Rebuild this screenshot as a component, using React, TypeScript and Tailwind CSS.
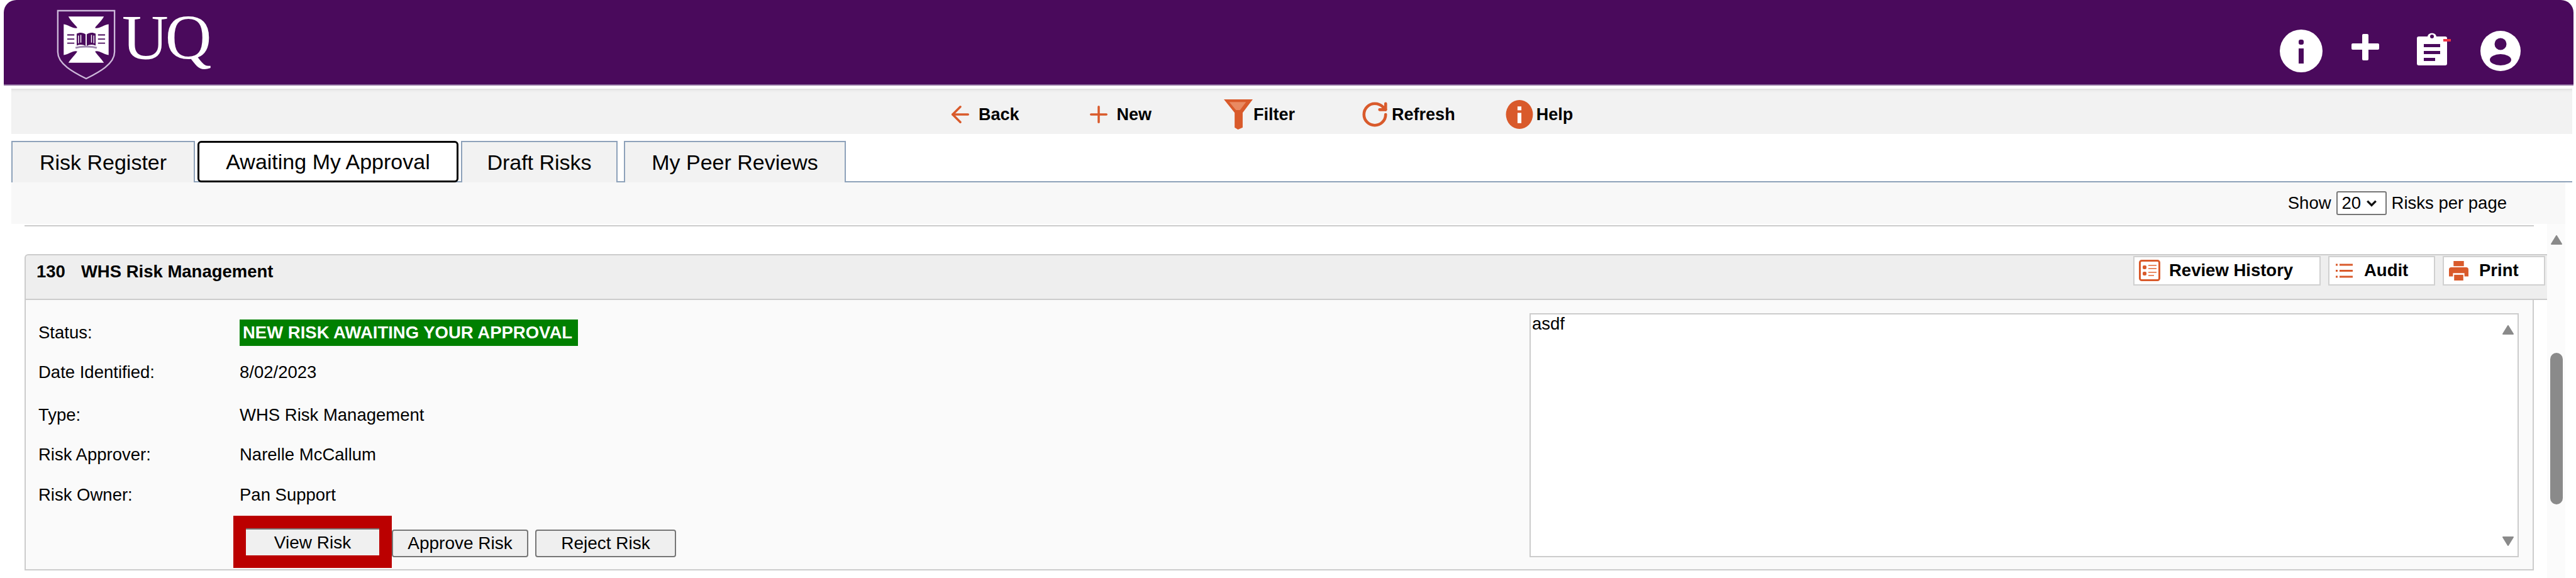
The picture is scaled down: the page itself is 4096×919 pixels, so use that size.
import React from "react";
import { ArrowLeft, Plus, RotateCw } from "lucide-react";

const FONT = "font-['Liberation_Sans',Arial,sans-serif]";

const UqLogo = () => (
  <div className="flex items-start">
    <svg width="94" height="112" viewBox="0 0 100 119" className="mt-[15px]">
      <path d="M2 2H98V72C98 92 72 106 50 117C28 106 2 92 2 72Z" fill="none" stroke="#cdb9da" strokeWidth="2.5" />
      <path d="M20 12H80C76 20 68 26 65 31C70 34 80 26 88 25V77C80 76 70 68 65 71C68 76 76 84 80 90H20C24 84 32 76 35 71C30 68 20 76 12 77V25C20 26 30 34 35 31C32 26 24 20 20 12Z" fill="#ffffff" />
      <path d="M34 41C39 38 45 39 49 42V62C45 59 39 59 34 61ZM51 42C55 39 61 38 66 41V61C61 59 55 59 51 62Z" fill="#4a0a5c" />
      <path d="M37 44V57M41 43V56M59 43V56M63 44V57" stroke="#ffffff" strokeWidth="1.5" />
      <path d="M18 43H30M18 50H30M18 57H30M70 43H82M70 50H82M70 57H82" stroke="#4a0a5c" strokeWidth="2" />
      <path d="M32 65C40 62 60 62 68 65" fill="none" stroke="#9d86ad" strokeWidth="3" />
    </svg>
    <span className="ml-[10px] mt-[4px] font-['Liberation_Serif',serif] text-[102px] leading-[112px] tracking-[-5px] text-white">
      UQ
    </span>
  </div>
);

const TopIcons = () => (
  <div className="flex items-start">
    <svg width="68" height="68" viewBox="0 0 68 68" className="mt-[47px]">
      <circle cx="34" cy="34" r="34" fill="#ffffff" />
      <rect x="30" y="30" width="8" height="24" fill="#4a0a5c" />
      <rect x="30" y="16" width="8" height="8" rx="3" fill="#4a0a5c" />
    </svg>
    <svg width="46" height="44" viewBox="0 0 46 44" className="ml-[45px] mt-[53px]">
      <path d="M18 3a2 2 0 0 1 2-2h6a2 2 0 0 1 2 2v13h15a2 2 0 0 1 2 2v6a2 2 0 0 1-2 2H28v15a2 2 0 0 1-2 2h-6a2 2 0 0 1-2-2V26H3a2 2 0 0 1-2-2v-6a2 2 0 0 1 2-2h15Z" fill="#ffffff" />
    </svg>
    <svg width="56" height="56" viewBox="0 0 56 56" className="ml-[58px] mt-[49px]">
      <path d="M4 9H18C19 2 31 2 32 9H46a3 3 0 0 1 3 3V52a3 3 0 0 1-3 3H4a3 3 0 0 1-3-3V12a3 3 0 0 1 3-3Z" fill="#ffffff" />
      <circle cx="25" cy="9" r="3" fill="#4a0a5c" />
      <path d="M12 21H38V26H12ZM12 32H38V37H12ZM12 43H30V48H12Z" fill="#4a0a5c" />
      <rect x="43" y="13" width="12" height="4" fill="#ee3344" />
    </svg>
    <svg width="64" height="64" viewBox="0 0 64 64" className="ml-[46px] mt-[49px]">
      <circle cx="32" cy="32" r="32" fill="#ffffff" />
      <circle cx="32" cy="21" r="9.5" fill="#4a0a5c" />
      <ellipse cx="32" cy="46" rx="17" ry="9" fill="#4a0a5c" />
    </svg>
  </div>
);

const Funnel = () => (
  <svg width="46" height="48" viewBox="0 0 43 45">
    <path d="M0 0H43L28 20V42L21 45L16 42V20Z" fill="#d95a2b" />
    <path d="M8 4H33L24 16H18Z" fill="#e98a62" />
  </svg>
);

const HelpIcon = () => (
  <svg width="44" height="46" viewBox="0 0 42 45">
    <ellipse cx="21" cy="22.5" rx="21" ry="22.5" fill="#d95a2b" />
    <rect x="18" y="20" width="6" height="16" fill="#ffffff" />
    <rect x="18" y="10" width="6" height="6" fill="#ffffff" />
  </svg>
);

const Triangle = ({ down }: { down?: boolean }) => (
  <svg width="20" height="15" viewBox="0 0 20 15">
    <path
      d={down ? "M2 1H18L10 14Z" : "M2 14H18L10 1Z"}
      fill="#8a8a8a"
      stroke="#8a8a8a"
      strokeWidth="2"
      strokeLinejoin="round"
    />
  </svg>
);

const tabBase = "h-[66px] flex items-center justify-center text-[34px] text-black";
const tabIdle = "bg-[#f2f2f2] border-t-2 border-x-2 border-[#8ea2ba]";

const rows: [string, React.ReactNode][] = [
  [
    "Status:",
    <span className="bg-[#008000] px-[5px] h-[42px] w-[538px] flex items-center font-bold text-white whitespace-nowrap">
      NEW RISK AWAITING YOUR APPROVAL
    </span>,
  ],
  ["Date Identified:", "8/02/2023"],
  ["Type:", "WHS Risk Management"],
  ["Risk Approver:", "Narelle McCallum"],
  ["Risk Owner:", "Pan Support"],
];

const rowGaps = ["", "mt-[31px]", "mt-[36px]", "mt-[31px]", "mt-[32px]"];

const btn =
  "h-[44px] flex items-center justify-center bg-[#efefef] border-2 border-[#767676] rounded-[4px] text-[28px] text-black";

const HeadBtn = ({ cls, icon, label }: { cls: string; icon: React.ReactNode; label: string }) => (
  <div className={`${cls} h-[47px] bg-white border-2 border-[#d0d0d0] flex items-center font-bold`}>
    {icon}
    {label}
  </div>
);

const App: React.FC = () => {
  return (
    <div className={`${FONT} w-[4096px] h-[919px] overflow-hidden bg-white text-[27.5px] leading-[32px] text-black`}>
      {/* Purple banner */}
      <header className="ml-[6px] mr-[4px] h-[136px] bg-[#4a0a5c] border-b-2 border-[#8b6a9b] rounded-t-[20px] flex justify-between pl-[84px] pr-[84px]">
        <UqLogo />
        <TopIcons />
      </header>

      <div className="ml-[18px] mr-[6px]">
        {/* Toolbar */}
        <div className="mt-[5px] h-[72px] pt-[10px] bg-[#f2f2f2] flex items-center pl-[1494px] text-[27px] font-bold shadow-[inset_0_6px_6px_-6px_#cccccc]">
          <ArrowLeft size={42} strokeWidth={2} color="#d95a2b" className="-ml-[6px]" />
          <span className="ml-[8px]">Back</span>
          <Plus size={42} strokeWidth={2} color="#d95a2b" className="ml-[105px]" />
          <span className="ml-[8px]">New</span>
          <span className="ml-[115px]"><Funnel /></span>
          <span className="ml-[1px]">Filter</span>
          <RotateCw size={46} strokeWidth={2.4} color="#d95a2b" className="ml-[104px]" />
          <span className="ml-[4px]">Refresh</span>
          <span className="ml-[80px]"><HelpIcon /></span>
          <span className="ml-[5px]">Help</span>
        </div>

        {/* Tabs */}
        <div className="mt-[11px] flex border-b-2 border-[#8ea2ba] h-[66px]">
          <div className={`${tabBase} ${tabIdle} w-[292px]`}>Risk Register</div>
          <div className={`${tabBase} w-[415px] ml-[4px] bg-white border-[3px] border-black rounded-[6px]`}>Awaiting My Approval</div>
          <div className={`${tabBase} ${tabIdle} w-[249px] ml-[4px]`}>Draft Risks</div>
          <div className={`${tabBase} ${tabIdle} w-[353px] ml-[10px]`}>My Peer Reviews</div>
        </div>

        {/* Page size bar */}
        <div className="h-[66px] mr-[11px] bg-[#f8f8f8] flex items-center justify-end pr-[93px]">
          <span>Show</span>
          <span className="ml-[8px] w-[80px] h-[38px] bg-white border-2 border-[#767676] rounded-[3px] flex items-center pl-[7px]">
            20
            <svg width="18" height="12" viewBox="0 0 16 10" className="ml-[8px]">
              <path d="M2 2L8 8L14 2" fill="none" stroke="#111111" strokeWidth="3" />
            </svg>
          </span>
          <span className="ml-[8px]">Risks per page</span>
        </div>

        <div className="flex mr-[11px]">
          <div className="flex-1">
            <div className="h-[2px] mt-[2px] mx-[21px] bg-[#cccccc]" />

            {/* Risk card */}
            <div className="mt-[44px] ml-[21px] h-[73px] bg-[#eeeeee] border-t-2 border-b-2 border-l-2 border-[#cccccc] rounded-tl-[6px] flex items-center justify-between pr-[3px] font-bold">
              <div className="flex pl-[17px] -mt-[18px]">
                <span>130</span>
                <span className="ml-[25px]">WHS Risk Management</span>
              </div>
              <div className="flex -mt-[21px]">
                <HeadBtn
                  cls="w-[298px] pl-[7px]"
                  label="Review History"
                  icon={
                    <svg width="34" height="34" viewBox="0 0 34 34" className="mr-[14px]">
                      <rect x="1.5" y="1.5" width="31" height="31" rx="3" fill="none" stroke="#d95a2b" strokeWidth="3" />
                      <rect x="6" y="9" width="6" height="6" rx="2" fill="#d95a2b" />
                      <rect x="6" y="19" width="6" height="6" rx="2" fill="#d95a2b" />
                      <path d="M15 9H28M15 14H28M15 20H28M15 25H24" stroke="#e98a62" strokeWidth="2" />
                    </svg>
                  }
                />
                <HeadBtn
                  cls="w-[170px] ml-[12px] pl-[10px]"
                  label="Audit"
                  icon={
                    <svg width="27" height="27" viewBox="0 0 27 27" className="mr-[18px]">
                      <path d="M6 4H27M6 13.5H27M6 23H27" stroke="#d95a2b" strokeWidth="3" />
                      <path d="M0 4H3M0 13.5H3M0 23H3" stroke="#d95a2b" strokeWidth="3" />
                    </svg>
                  }
                />
                <HeadBtn
                  cls="w-[163px] ml-[12px] pl-[8px]"
                  label="Print"
                  icon={
                    <svg width="31" height="35" viewBox="0 0 34 36" className="mr-[17px]">
                      <path d="M8 1H26V10H8ZM4 12H30a4 4 0 0 1 4 4V28H27V22H7V28H0V16a4 4 0 0 1 4-4Z" fill="#d95a2b" />
                      <path d="M9 25H25V35H9Z" fill="#d95a2b" />
                    </svg>
                  }
                />
              </div>
            </div>

            <div className="mr-[21px] ml-[21px] h-[430px] bg-[#fafafa] border-x-2 border-b-2 border-[#cccccc] flex pr-[22px]">
              <div className="flex-1 pt-[36px] pl-[20px]">
                {rows.map(([label, value], i) => (
                  <div key={label} className={`flex items-center h-[32px] ${rowGaps[i]}`}>
                    <div className="w-[320px]">{label}</div>
                    <div>{value}</div>
                  </div>
                ))}
                <div className="ml-[310px] mt-[17px] flex items-start">
                  <div className="border-[20px] border-[#bb0000]">
                    <div className="w-[212px] h-[43px] flex items-center justify-center bg-[#f0f0f0] border-t-2 border-[#777777] text-[28px]">
                      View Risk
                    </div>
                  </div>
                  <div className={`${btn} w-[217px] mt-[22px]`}>Approve Risk</div>
                  <div className={`${btn} w-[224px] mt-[22px] ml-[11px]`}>Reject Risk</div>
                </div>
              </div>
              <div className="w-[1573px] h-[388px] mt-[21px] bg-white border-2 border-[#cccccc] flex justify-between pl-[2px] pr-[5px]">
                <span className="-mt-[1px]">asdf</span>
                <div className="w-[20px] flex flex-col justify-between pt-[17px] pb-[16px]">
                  <Triangle />
                  <Triangle down />
                </div>
              </div>
            </div>
          </div>

          {/* Page scrollbar */}
          <div className="w-[29px] h-[563px] bg-[#fbfbfb] flex flex-col items-center">
            <div className="mt-[18px]"><Triangle /></div>
            <div className="mt-[172px] w-[20px] h-[241px] rounded-full bg-[#8a8a8a]" />
          </div>
        </div>
      </div>
    </div>
  );
};

export default App;
